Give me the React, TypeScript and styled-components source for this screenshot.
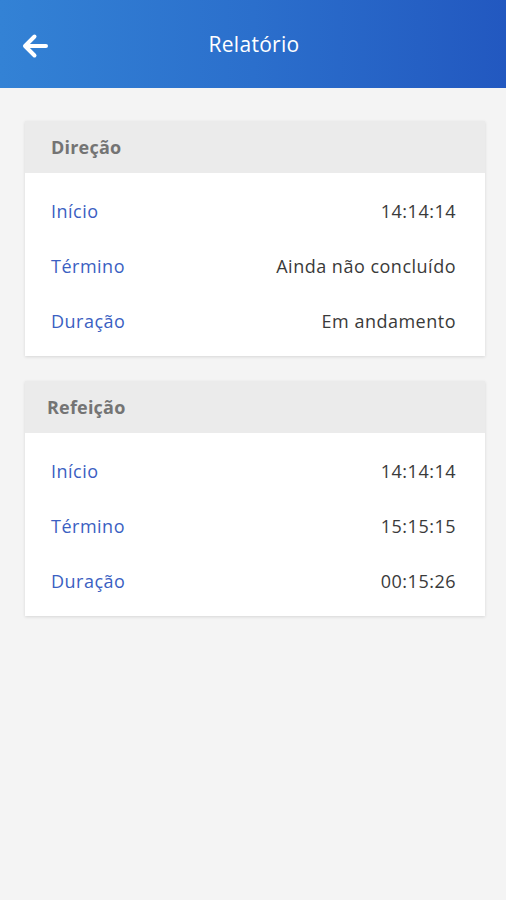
import styled, { createGlobalStyle } from "styled-components";

const GlobalStyle = createGlobalStyle`
  body {
    margin: 0;
    background-color: #f4f4f4;
    font-family: "Open Sans", "Noto Sans", sans-serif;
  }
`

const Page = styled.div`
  min-height: 900px;
  background-color: #f4f4f4;
`

const TopBar = styled.header`
  height: 88px;
  display: flex;
  align-items: center;
  justify-content: center;
  position: relative;
  background: linear-gradient(90deg, #3382d5 0%, #2b6fcc 50%, #2258c0 100%);
  color: white;
`

const BackButton = styled.button`
  position: absolute;
  left: 21px;
  top: 32px;
  width: 28px;
  height: 28px;
  padding: 0;
  border: none;
  background: none;
  cursor: pointer;
  display: flex;
`

const Title = styled.h1`
  margin: 0 0 0 2px;
  font-size: 21px;
  font-weight: 400;
  letter-spacing: 0.3px;
`

const Content = styled.main`
  padding: 33px 21px 0 25px;
  display: flex;
  flex-direction: column;
  gap: 25px;
`

const Card = styled.section`
  background-color: white;
  box-shadow: 0 1px 3px rgba(0, 0, 0, 0.12);
`

const CardHeader = styled.div<{ $indent: number }>`
  height: 52px;
  display: flex;
  align-items: center;
  padding-left: ${p => p.$indent}px;
  background-color: #ebebeb;
  color: #747474;
  font-size: 18px;
  font-weight: 700;
  letter-spacing: 0.2px;
`

const CardBody = styled.div`
  padding: 10px 29px 8px 26px;
`

const Row = styled.div`
  height: 55px;
  display: flex;
  align-items: center;
  justify-content: space-between;
  font-size: 18px;
  letter-spacing: 0.5px;
`

const Label = styled.span`
  color: #3b5fc2;
`

const Value = styled.span`
  color: #3a3a3a;
`

type Item = { label: string; value: string };

const sections: { title: string; indent: number; items: Item[] }[] = [
  {
    title: "Direção",
    indent: 26,
    items: [
      { label: "Início", value: "14:14:14" },
      { label: "Término", value: "Ainda não concluído" },
      { label: "Duração", value: "Em andamento" },
    ],
  },
  {
    title: "Refeição",
    indent: 22,
    items: [
      { label: "Início", value: "14:14:14" },
      { label: "Término", value: "15:15:15" },
      { label: "Duração", value: "00:15:26" },
    ],
  },
];

export default function App() {
  return (
    <Page>
      <GlobalStyle />
      <TopBar>
        <BackButton aria-label="Voltar">
          <svg width="28" height="28" viewBox="0 0 28 28">
            <path
              d="M25 14H5 M13.5 4.5 L4 14 L13.5 23.5"
              fill="none"
              stroke="white"
              strokeWidth="4"
              strokeLinecap="round"
              strokeLinejoin="round"
            />
          </svg>
        </BackButton>
        <Title>Relatório</Title>
      </TopBar>

      <Content>
        {sections.map(s => (
          <Card key={s.title}>
            <CardHeader $indent={s.indent}>{s.title}</CardHeader>
            <CardBody>
              {s.items.map(i => (
                <Row key={i.label}>
                  <Label>{i.label}</Label>
                  <Value>{i.value}</Value>
                </Row>
              ))}
            </CardBody>
          </Card>
        ))}
      </Content>
    </Page>
  );
}
